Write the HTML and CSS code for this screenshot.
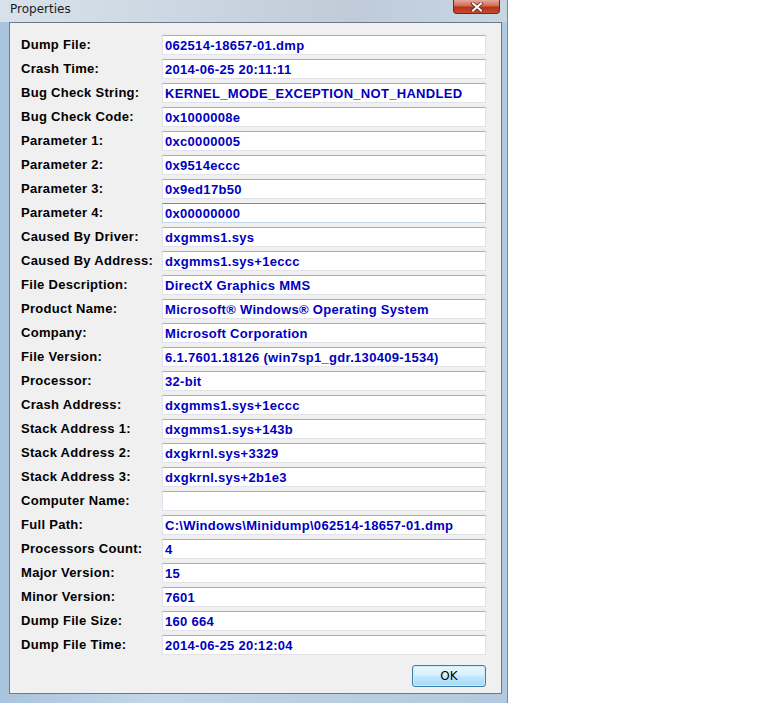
FILE: index.html
```html
<!DOCTYPE html>
<html>
    <head>
        <meta charset="UTF-8">
        <title>Properties</title>
        <link rel="stylesheet" href="styles.css">
    </head>
    <body>
        <div class="window">
            <!-- title bar -->
            <div class="titlebar">
                <span class="title">Properties</span>
                <span class="close">
                    <svg width="14" height="10" viewBox="0 0 14 10">
                        <path d="M3 1.5 L11 8.5 M11 1.5 L3 8.5" stroke="#5a2a22" stroke-width="3.6" stroke-linecap="square"/>
                        <path d="M3 1.5 L11 8.5 M11 1.5 L3 8.5" stroke="#ffffff" stroke-width="2" stroke-linecap="square"/>
                    </svg>
                </span>
            </div>

            <!-- dialog body -->
            <div class="client">
                <div class="row"><span class="label">Dump File:</span><span class="field">062514-18657-01.dmp</span></div>
                <div class="row"><span class="label">Crash Time:</span><span class="field">2014-06-25 20:11:11</span></div>
                <div class="row"><span class="label">Bug Check String:</span><span class="field">KERNEL_MODE_EXCEPTION_NOT_HANDLED</span></div>
                <div class="row"><span class="label">Bug Check Code:</span><span class="field">0x1000008e</span></div>
                <div class="row"><span class="label">Parameter 1:</span><span class="field">0xc0000005</span></div>
                <div class="row"><span class="label">Parameter 2:</span><span class="field">0x9514eccc</span></div>
                <div class="row"><span class="label">Parameter 3:</span><span class="field">0x9ed17b50</span></div>
                <div class="row"><span class="label">Parameter 4:</span><span class="field hot">0x00000000</span></div>
                <div class="row"><span class="label">Caused By Driver:</span><span class="field">dxgmms1.sys</span></div>
                <div class="row"><span class="label">Caused By Address:</span><span class="field">dxgmms1.sys+1eccc</span></div>
                <div class="row"><span class="label">File Description:</span><span class="field">DirectX Graphics MMS</span></div>
                <div class="row"><span class="label">Product Name:</span><span class="field">Microsoft® Windows® Operating System</span></div>
                <div class="row"><span class="label">Company:</span><span class="field">Microsoft Corporation</span></div>
                <div class="row"><span class="label">File Version:</span><span class="field">6.1.7601.18126 (win7sp1_gdr.130409-1534)</span></div>
                <div class="row"><span class="label">Processor:</span><span class="field">32-bit</span></div>
                <div class="row"><span class="label">Crash Address:</span><span class="field">dxgmms1.sys+1eccc</span></div>
                <div class="row"><span class="label">Stack Address 1:</span><span class="field">dxgmms1.sys+143b</span></div>
                <div class="row"><span class="label">Stack Address 2:</span><span class="field">dxgkrnl.sys+3329</span></div>
                <div class="row"><span class="label">Stack Address 3:</span><span class="field">dxgkrnl.sys+2b1e3</span></div>
                <div class="row"><span class="label">Computer Name:</span><span class="field"></span></div>
                <div class="row"><span class="label">Full Path:</span><span class="field">C:\Windows\Minidump\062514-18657-01.dmp</span></div>
                <div class="row"><span class="label">Processors Count:</span><span class="field">4</span></div>
                <div class="row"><span class="label">Major Version:</span><span class="field">15</span></div>
                <div class="row"><span class="label">Minor Version:</span><span class="field">7601</span></div>
                <div class="row"><span class="label">Dump File Size:</span><span class="field">160 664</span></div>
                <div class="row"><span class="label">Dump File Time:</span><span class="field">2014-06-25 20:12:04</span></div>

                <div class="buttons">
                    <button class="ok">OK</button>
                </div>
            </div>
        </div>
    </body>
</html>
```

FILE: styles.css
```css
* {
    box-sizing: border-box;
}

body {
    margin: 0;
    background-color: #ffffff;
}

/* the glass frame round the dialog */
.window {
    width: 508px;
    height: 703px;
    background: linear-gradient(90deg, #a9c4de 0%, #c3d6e8 30%, #bccfe2 60%, #b2c9df 100%);
    border-right: 1px solid #6f8aa5;
    position: relative;
}

.titlebar {
    height: 22px;
    display: flex;
    align-items: center;
    padding-left: 10px;
    background: linear-gradient(90deg, #d9e2ea 0%, #c9d5e1 40%, #bfcbd8 70%, #c8d6e4 100%);
}

.title {
    font-family: "DejaVu Sans", sans-serif;
    font-size: 12px;
    color: #1b1b1b;
    margin-top: -4px;
}

/* the red close button sits over the frame */
.close {
    position: absolute;
    top: 0;
    left: 453px;
    width: 47px;
    height: 14px;
    border: 1px solid #6b2a20;
    border-top: none;
    border-radius: 0 0 4px 4px;
    background: linear-gradient(180deg, #e9a99b 0%, #d06b55 45%, #b7321b 55%, #c84a2c 100%);
    display: flex;
    justify-content: center;
    align-items: center;
}

.close svg {
    display: block;
}

.client {
    margin-left: 9px;
    width: 493px;
    height: 672px;
    background-color: #f0f0f0;
    border: 1px solid #6b7a88;
    padding-top: 12px;
    padding-left: 11px;
    padding-right: 15px;
}

.row {
    display: flex;
    height: 20px;
    margin-bottom: 4px;
}

.label {
    width: 141px;
    line-height: 20px;
    font-family: "Liberation Sans", Arial, sans-serif;
    font-weight: bold;
    font-size: 13px;
    letter-spacing: 0.3px;
    color: #000000;
    white-space: nowrap;
}

.field {
    flex: 1;
    height: 20px;
    line-height: 19px;
    padding-left: 2px;
    background-color: #ffffff;
    border: 1px solid #e2e3ea;
    border-top-color: #abadb3;
    font-family: "Liberation Sans", Arial, sans-serif;
    font-weight: bold;
    font-size: 13px;
    letter-spacing: 0.3px;
    color: #0000c0;
    white-space: nowrap;
    overflow: hidden;
}

/* field under the mouse */
.field.hot {
    border-color: #c5daed;
    border-top-color: #5794bf;
}

.buttons {
    display: flex;
    justify-content: flex-end;
    padding-top: 6px;
}

.ok {
    width: 74px;
    height: 22px;
    border: 1px solid #3c7fb1;
    border-radius: 3px;
    background: linear-gradient(180deg, #eaf6fd 0%, #d9f0fc 45%, #bee6fd 55%, #a7d9f5 100%);
    box-shadow: inset 0 0 0 1px #cdeafc;
    font-family: "DejaVu Sans", sans-serif;
    font-size: 12px;
    color: #000000;
    padding: 0;
}
```
